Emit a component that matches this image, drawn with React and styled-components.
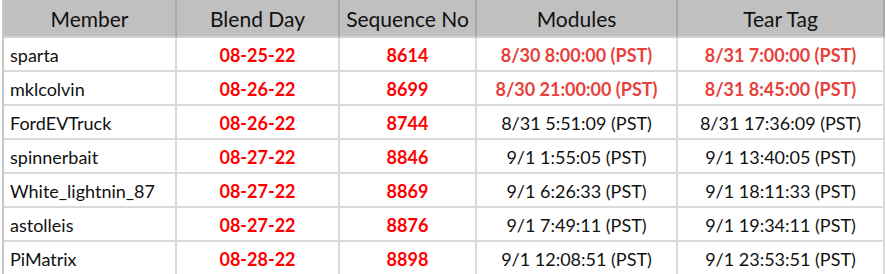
import React from "react";
import styled, { createGlobalStyle } from "styled-components";

const Global = createGlobalStyle`
  html, body { margin: 0; padding: 0; background: #fff; }
  body { font-family: Lato, "Open Sans", sans-serif; }
`;

const Sheet = styled.div`
  width: 886px;
  height: 274px;
  overflow: hidden;
  background: #fff;
`;

const Table = styled.div`
  display: grid;
  grid-template-columns: 173px 163px 137px 201px 207px;
  grid-template-rows: 38px;
  grid-auto-rows: 34px;
  margin-left: 2px;
  border-left: 2px solid #c8c8c8;
`;

const HeadCell = styled.div`
  background: #c0c0c0;
  border-right: 2px solid #a9a9a9;
  border-bottom: 2px solid #d0d0d0;
  display: flex;
  align-items: center;
  justify-content: center;
  font-size: 21px;
  color: #111;
  padding-top: 1px;
`;

const Cell = styled.div`
  border-right: 2px solid #dadada;
  border-bottom: 2px solid #dadada;
  display: flex;
  align-items: center;
  justify-content: ${(p) => (p.$left ? "flex-start" : "center")};
  padding-left: ${(p) => (p.$left ? "6px" : "0")};
  font-size: 18px;
  font-weight: ${(p) => (p.$tone ? 700 : 400)};
  color: ${(p) =>
    p.$tone === "red" ? "#ff0000" : p.$tone === "soft" ? "#e8413c" : "#111"};
  white-space: nowrap;
  padding-top: 1px;
`;

const headers = ["Member", "Blend Day", "Sequence No", "Modules", "Tear Tag"];

const rows = [
  ["sparta", "08-25-22", "8614", "8/30 8:00:00 (PST)", "8/31 7:00:00 (PST)", true],
  ["mklcolvin", "08-26-22", "8699", "8/30 21:00:00 (PST)", "8/31 8:45:00 (PST)", true],
  ["FordEVTruck", "08-26-22", "8744", "8/31 5:51:09 (PST)", "8/31 17:36:09 (PST)", false],
  ["spinnerbait", "08-27-22", "8846", "9/1 1:55:05 (PST)", "9/1 13:40:05 (PST)", false],
  ["White_lightnin_87", "08-27-22", "8869", "9/1 6:26:33 (PST)", "9/1 18:11:33 (PST)", false],
  ["astolleis", "08-27-22", "8876", "9/1 7:49:11 (PST)", "9/1 19:34:11 (PST)", false],
  ["PiMatrix", "08-28-22", "8898", "9/1 12:08:51 (PST)", "9/1 23:53:51 (PST)", false],
];

export default function App() {
  return (
    <Sheet>
      <Global />
      <Table>
        {headers.map((h) => (
          <HeadCell key={h}>{h}</HeadCell>
        ))}
        {rows.map(([m, d, s, mod, tag, hot]) => (
          <React.Fragment key={m}>
            <Cell $left>{m}</Cell>
            <Cell $tone="red">{d}</Cell>
            <Cell $tone="red">{s}</Cell>
            <Cell $tone={hot ? "soft" : undefined}>{mod}</Cell>
            <Cell $tone={hot ? "soft" : undefined}>{tag}</Cell>
          </React.Fragment>
        ))}
      </Table>
    </Sheet>
  );
}
